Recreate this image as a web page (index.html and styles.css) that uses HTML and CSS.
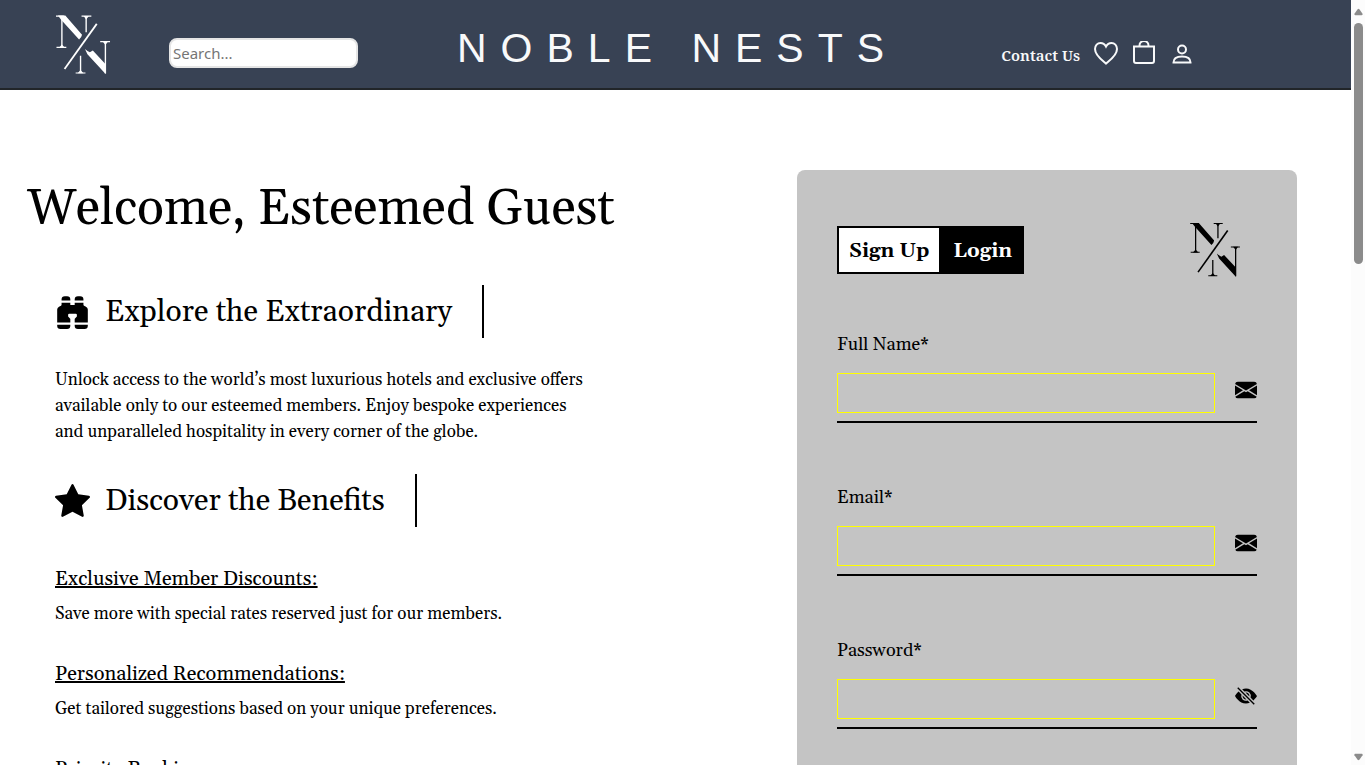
FILE: index.html
```html
<!DOCTYPE html>
<html lang="en">
<head>
<meta charset="utf-8">
<meta name="viewport" content="width=device-width, initial-scale=1">
<title>Noble Nests</title>
<link rel="stylesheet" href="styles.css">
</head>
<body>
<svg class="sprite" aria-hidden="true">
  <symbol id="monogram" viewBox="0 0 56 62">
    <g fill="none" stroke="currentColor" stroke-width="1.4">
      <path d="M6 2V33M30.700 2V18M25 42V59M50.300 28V60"/>
      <path stroke-width="1.200" d="M0 1.600H8M0.500 33.500H10.500M26 1.600H36M20 59.500H30M45 27.600H55"/>
      <path stroke-width="1.800" d="M41.500 9.500L8.700 55.500"/>
    </g>
    <path fill="currentColor" d="M2 1H9.500L26.500 20.500Q26 23.500 23.500 25.500L5 5ZM29.500 35Q33 38 34.500 38.500L37.500 36.500L50.500 50.500V60.500L32 40.500ZM28 1.500H33.500L30.700 5ZM47.500 27.500H53L50.300 31ZM3 33.800L6 30.500L9 33.800ZM22 59.800L25 56.500L28 59.800Z"/>
  </symbol>
  <symbol id="mail" viewBox="0 0 16 16">
    <path fill="currentColor" d="M.05 3.555A2 2 0 0 1 2 2h12a2 2 0 0 1 1.950 1.555L8 8.414zM0 4.697v7.104l5.803-3.558zM6.761 8.830l-6.570 4.027A2 2 0 0 0 2 14h12a2 2 0 0 0 1.808-1.144l-6.570-4.027L8 9.586zm3.436-.586L16 11.801V4.697z"/>
  </symbol>
</svg>
<div class="window">
  <div class="page">
    <header class="topbar">
      <a class="logo" href="#" aria-label="Noble Nests home"><svg><use href="#monogram"/></svg></a>
      <input class="search" type="search" placeholder="Search..." aria-label="Search">
      <div class="brand">NOBLE NESTS</div>
      <nav class="links">
        <a class="contact" href="#">Contact Us</a>
        <a class="icon-link" href="#" aria-label="Favourites">
          <svg class="heart" viewBox="0 0 24 24"><path d="M12 22.500C10 20.500 1 15 1 8C1 4.500 3.500 2 6.500 2C9.300 2 11 3.700 12 5.600C13 3.700 14.700 2 17.500 2C20.500 2 23 4.500 23 8C23 15 14 20.500 12 22.500Z"/></svg>
        </a>
        <a class="icon-link" href="#" aria-label="Bag">
          <svg class="bag" viewBox="0 0 24 24"><path d="M2 5.500H22V20Q22 22 20 22H4Q2 22 2 20ZM7.500 5V4.500A4.500 4.500 0 0 1 16.500 4.500V5"/></svg>
        </a>
        <a class="icon-link" href="#" aria-label="Account">
          <svg class="person" viewBox="0 0 20 24"><circle cx="10" cy="8.500" r="4"/><path d="M1.500 21.500C1.500 17.400 5 15.400 10 15.400S18.500 17.400 18.500 21.500Z"/></svg>
        </a>
      </nav>
    </header>
    <main class="content">
      <section class="intro">
        <h1>Welcome, Esteemed Guest</h1>
        <div class="details">
          <h2>
            <svg viewBox="0 0 16 16"><path d="M4.500 1A1.500 1.500 0 0 0 3 2.500V3h4v-.5A1.500 1.500 0 0 0 5.500 1zM7 4v1h2V4h4v.882a.5.5 0 0 0 .276.447l.895.447A1.500 1.500 0 0 1 15 7.118V13H9v-1.500a.5.5 0 0 1 .146-.354l.854-.853V9.500a.5.5 0 0 0-.5-.5h-3a.5.5 0 0 0-.5.5v.793l.854.853A.5.5 0 0 1 7 11.500V13H1V7.118a1.500 1.500 0 0 1 .83-1.342l.894-.447A.5.5 0 0 0 3 4.882V4zM1 14v.5A1.500 1.500 0 0 0 2.500 16h3A1.500 1.500 0 0 0 7 14.500V14zm8 0v.5a1.500 1.500 0 0 0 1.500 1.500h3a1.500 1.500 0 0 0 1.500-1.500V14zm4-11v-.5A1.500 1.500 0 0 0 11.500 1h-1A1.500 1.500 0 0 0 9 2.500V3z"/></svg>
            <span>Explore the Extraordinary</span>
          </h2>
          <p class="lead">Unlock access to the world’s most luxurious hotels and exclusive offers available only to our esteemed members. Enjoy bespoke experiences and unparalleled hospitality in every corner of the globe.</p>
          <h2>
            <svg viewBox="0 0 16 16"><path d="M3.612 15.443c-.386.198-.824-.149-.746-.592l.83-4.730L.173 6.765c-.329-.314-.158-.888.283-.95l4.898-.696L7.538.792c.197-.39.73-.39.927 0l2.184 4.327 4.898.696c.441.062.612.636.282.95l-3.522 3.356.83 4.730c.078.443-.36.79-.746.592L8 13.187l-4.389 2.256z"/></svg>
            <span>Discover the Benefits</span>
          </h2>
          <div class="benefits">
            <div class="benefit">
              <h3>Exclusive Member Discounts:</h3>
              <p>Save more with special rates reserved just for our members.</p>
            </div>
            <div class="benefit">
              <h3>Personalized Recommendations:</h3>
              <p>Get tailored suggestions based on your unique preferences.</p>
            </div>
            <div class="benefit">
              <h3>Priority Booking:</h3>
            </div>
          </div>
        </div>
      </section>
      <form class="card">
        <div class="card-head">
          <div class="tabs">
            <button class="tab tab-active" type="button">Sign Up</button>
            <button class="tab" type="button">Login</button>
          </div>
          <svg class="card-logo" aria-hidden="true"><use href="#monogram"/></svg>
        </div>
        <div class="field">
          <label for="name">Full Name*</label>
          <div class="field-row"><input id="name" type="text"><svg><use href="#mail"/></svg></div>
        </div>
        <div class="field">
          <label for="email">Email*</label>
          <div class="field-row"><input id="email" type="email"><svg><use href="#mail"/></svg></div>
        </div>
        <div class="field">
          <label for="password">Password*</label>
          <div class="field-row"><input id="password" type="password">
            <svg viewBox="0 0 16 16"><path d="m10.790 12.912-1.614-1.615a3.500 3.500 0 0 1-4.474-4.474l-2.060-2.060C.938 6.278 0 8 0 8s3 5.500 8 5.500a7 7 0 0 0 2.790-.588M5.210 3.088A7 7 0 0 1 8 2.500c5 0 8 5.500 8 5.500s-.939 1.721-2.641 3.238l-2.062-2.062a3.500 3.500 0 0 0-4.474-4.474z"/><path d="M5.525 7.646a2.500 2.500 0 0 0 2.829 2.829zm4.950.708-2.829-2.829a2.500 2.500 0 0 1 2.829 2.829zm3.171 6-12-12 .708-.708 12 12z"/></svg>
          </div>
        </div>
      </form>
    </main>
  </div>
  <div class="scrollbar" aria-hidden="true">
    <svg viewBox="0 0 10 8"><path d="M4 1Q5 0 6 1L9.500 6Q10 7.500 8.500 7.500H1.500Q0 7.500 .5 6Z"/></svg>
    <div class="track"><div class="thumb"></div></div>
    <svg viewBox="0 0 10 8"><path d="M4 7Q5 8 6 7L9.500 2Q10 .5 8.500 .5H1.500Q0 .5 .5 2Z"/></svg>
  </div>
</div>
</body>
</html>
```
FILE: styles.css
```css
* {
  box-sizing: border-box;
}

body {
  margin: 0;
  background: #fff;
  color: #000;
  font-family: Georgia, Gelasio, "Liberation Serif", serif;
}

h1, h2, h3, p {
  margin: 0;
  font-weight: 400;
}

.sprite {
  display: none;
}

.window {
  display: grid;
  grid-template-columns: minmax(0, 1fr) 14px;
  height: 100vh;
}

.page {
  overflow-y: auto;
  scrollbar-width: none;
}

/* Top bar */
.topbar {
  display: flex;
  align-items: center;
  height: 90px;
  padding: 0 159px 0 56px;
  border-bottom: 2px solid #212529;
  background: #384254;
  color: #f8f9fa;
}

.logo {
  padding-top: 2px;
  color: #fff;
}

.logo svg {
  display: block;
  width: 55px;
  height: 62px;
}

.search {
  width: 189px;
  height: 30px;
  margin: 18px 0 0 58px;
  padding: 0 2px;
  border: 2px solid #e5e5e5;
  border-radius: 8px;
  background: #fff;
  font-family: "Segoe UI", "Noto Sans", sans-serif;
  font-size: 15px;
}

.search::placeholder {
  color: #757575;
}

.brand {
  margin: 9px 0 0 99px;
  font-family: Arial, "Liberation Sans", sans-serif;
  font-size: 41px;
  letter-spacing: 14px;
  white-space: nowrap;
}

.links {
  display: flex;
  align-items: center;
  gap: 14px;
  margin: 18px 0 0 auto;
}

.contact {
  padding-top: 4px;
  color: inherit;
  font-family: "Noto Serif", "Liberation Serif", serif;
  font-size: 15px;
  font-weight: 600;
  text-decoration: none;
  white-space: nowrap;
}

.icon-link {
  color: inherit;
}

.icon-link svg {
  display: block;
  width: 24px;
  height: 24px;
  fill: none;
  stroke: currentColor;
  stroke-width: 2px;
}

.icon-link .person {
  width: 20px;
  margin-left: 2px;
}

/* Main area */
.content {
  display: flex;
  justify-content: space-between;
  align-items: flex-start;
  gap: 40px;
  padding: 80px 54px 0 27px;
}

.intro h1 {
  font-size: 50px;
  line-height: 80px;
  white-space: nowrap;
}

.details {
  padding: 35px 0 0 28px;
}

.details h2 {
  display: flex;
  align-items: center;
  width: fit-content;
  height: 53px;
  padding-right: 30px;
  border-right: 2px solid #000;
  font-size: 30px;
  white-space: nowrap;
}

.details h2 svg {
  width: 35px;
  height: 35px;
  margin-right: 15px;
}

.lead {
  width: 536px;
  margin: 29px 0;
  font-size: 17px;
  line-height: 26px;
}

.benefits {
  display: grid;
  gap: 30px;
  padding-top: 37px;
}

.benefit h3 {
  font-size: 20px;
  line-height: 30px;
  text-decoration: underline;
}

.benefit p {
  padding-top: 5px;
  font-size: 17px;
  line-height: 30px;
}

/* Sign-up card */
.card {
  flex: 0 0 500px;
  padding: 52px 40px 80px;
  border-radius: 8px;
  background: #c4c4c4;
}

.card-head {
  display: flex;
  justify-content: space-between;
  align-items: center;
  height: 56px;
  margin-bottom: 52px;
  padding-right: 16px;
}

.tabs {
  display: flex;
  height: 48px;
  border: 2px solid #000;
  background: #000;
}

.tab {
  padding: 2px 10px 0 14px;
  border: 0;
  background: #000;
  color: #fff;
  font: inherit;
  font-size: 20px;
  font-weight: 700;
}

.tab-active {
  padding: 2px 10px 0;
  background: #fff;
  color: #000;
}

.card-logo {
  width: 51px;
  height: 56px;
}

.field {
  margin-bottom: 60px;
}

.field label {
  display: block;
  font-size: 18px;
  line-height: 30px;
}

.field-row {
  display: flex;
  justify-content: space-between;
  gap: 20px;
  padding: 13px 0 8px;
  border-bottom: 2px solid #000;
}

.field-row input {
  flex: 1;
  min-width: 0;
  height: 40px;
  padding: 0 10px;
  border: 1px solid #ff0;
  background: transparent;
  font: inherit;
  font-size: 18px;
}

.field-row svg {
  width: 22px;
  height: 22px;
  margin-top: 6px;
}

/* Scroll bar */
.scrollbar {
  display: flex;
  flex-direction: column;
  align-items: center;
  gap: 7px;
  padding: 8px 0 4px;
  background: #fcfcfc;
}

.scrollbar svg {
  width: 9px;
  height: 8px;
  fill: #8b8b8b;
}

.track {
  flex: 1;
  width: 9px;
}

.thumb {
  height: 33.3%;
  border-radius: 5px;
  background: #8b8b8b;
}
```
